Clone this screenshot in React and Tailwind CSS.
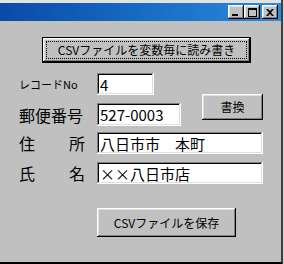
const raised =
  'shadow-[inset_-1px_-1px_#000,inset_1px_1px_#fff,inset_-2px_-2px_#808080,inset_2px_2px_#dfdfdf]'
const sunken =
  'shadow-[inset_-1px_-1px_#fff,inset_1px_1px_#808080,inset_-2px_-2px_#dfdfdf,inset_2px_2px_#000]'
const jp = "font-['Noto_Sans_CJK_JP',sans-serif]"

function TitleButton({ children, className = '' }) {
  return (
    <div className={`flex h-[14px] w-[16px] items-center justify-center bg-[#c0c0c0] ${raised} ${className}`}>
      {children}
    </div>
  )
}

function Field({ value, width, height = 'h-[22px]' }) {
  return (
    <div className={`flex items-center bg-white pl-[3px] text-[15px] leading-none text-black ${sunken} ${width} ${height} ${jp}`}>
      {value}
    </div>
  )
}

function Label({ left, right }) {
  return (
    <div className={`flex w-[66px] justify-between text-[16px] leading-none text-black ${jp}`}>
      <span>{left}</span>
      <span>{right}</span>
    </div>
  )
}

export default function App() {
  return (
    <div className="h-[264px] w-[284px] bg-[#d4d4d4]">
      <div className="flex h-[264px] w-[283px] flex-col border-b-2 border-r-2 border-b-[#000] border-r-[#404040] bg-[#c0c0c0]">
        <div className="h-[3px] bg-[#e2e2e2]" />
        <div className="flex h-[18px] w-[281px] items-center justify-end bg-gradient-to-r from-[#0a4aa8] to-[#2a8cdc] pr-[3px]">
          <TitleButton>
            <div className="mt-[6px] mr-[3px] h-[2px] w-[6px] bg-black" />
          </TitleButton>
          <TitleButton>
            <div className="h-[9px] w-[9px] border border-t-2 border-black" />
          </TitleButton>
          <TitleButton className="ml-[2px]">
            <svg width="8" height="7" viewBox="0 0 8 7">
              <path d="M0 0h2l2 2 2-2h2L5 3.5 8 7H6L4 5 2 7H0l3-3.5z" fill="#000" />
            </svg>
          </TitleButton>
        </div>

        <div className="flex flex-col pl-[19px]">
          <div className="ml-[23px] mt-[16px] h-[26px] w-[209px] border border-black">
            <div className={`flex h-full w-full items-center justify-center p-[3px] ${raised}`}>
              <div className={`flex h-full w-full items-center justify-center border border-dotted border-black text-[12px] leading-none text-black ${jp}`}>
                CSVファイルを変数毎に読み書き
              </div>
            </div>
          </div>

          <div className="flex">
            <div className="flex flex-col">
              <div className="mt-[10px] flex items-center">
                <div className={`w-[78px] text-[11px] leading-none text-black ${jp}`}>レコードNo</div>
                <Field value="4" width="w-[57px]" />
              </div>
              <div className="mt-[8px] flex items-center">
                <div className="w-[78px]">
                  <Label left="郵便番号" right="" />
                </div>
                <Field value="527-0003" width="w-[84px]" height="h-[23px]" />
              </div>
            </div>
            <div
              className={`ml-[21px] mt-[31px] flex h-[26px] w-[61px] items-center justify-center bg-[#c0c0c0] text-[12px] leading-none text-black ${raised} ${jp}`}
            >
              書換
            </div>
          </div>

          <div className="mt-[6px] flex items-center">
            <div className="w-[78px]">
              <Label left="住" right="所" />
            </div>
            <Field value="八日市市　本町" width="w-[166px]" />
          </div>
          <div className="mt-[8px] flex items-center">
            <div className="w-[78px]">
              <Label left="氏" right="名" />
            </div>
            <Field value="××八日市店" width="w-[166px]" />
          </div>

          <div
            className={`ml-[78px] mt-[24px] flex h-[29px] w-[139px] items-center justify-center bg-[#c0c0c0] text-[12px] leading-none text-black ${raised} ${jp}`}
          >
            CSVファイルを保存
          </div>
        </div>
      </div>
    </div>
  )
}
